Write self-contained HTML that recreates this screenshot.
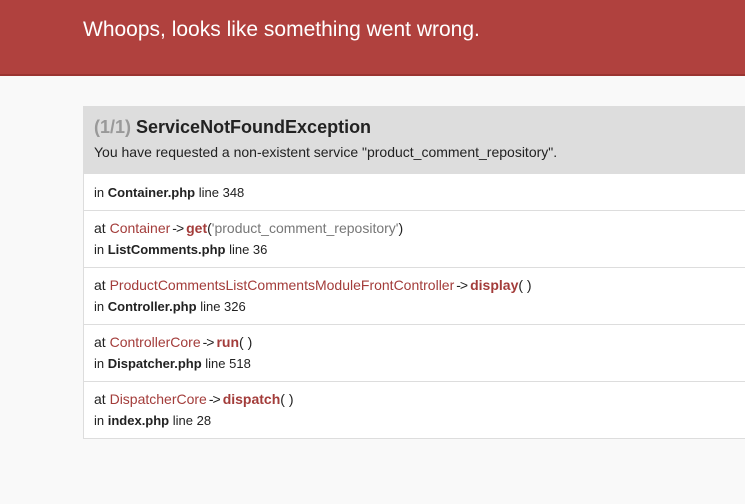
<!DOCTYPE html>
<html><head><style>
body{margin:0;background:#f9f9f9;font-family:"Liberation Sans",Arial,sans-serif;color:#222;width:745px;height:504px;overflow:hidden}
.hd{background:#b0413e;height:74px;border-bottom:2px solid #9a3431;}
.hd h1{margin:0;padding:18px 0 0 83px;font-size:21px;font-weight:normal;color:#fff;line-height:24px}
.box{position:absolute;left:83px;top:106px;width:700px;border:1px solid #ddd;background:#fff}
.top{background:#dddddd;height:66px;padding:0 0 0 10px}
.top h2{margin:0;padding-top:9px;font-size:18px;line-height:22px;font-weight:bold;color:#222}
.top h2 span{color:#999}
.top p{margin:6px 0 0;font-size:14px;color:#222}
.row{border-top:1px solid #ddd;padding:0 0 0 10px;font-size:13px;line-height:21px;box-sizing:border-box}
.row .a{font-size:14px}
.r1{height:37px;padding-top:8px}
.r2{height:57px;padding-top:7px}
.c{color:#a33c3a}
.f{color:#a33c3a;font-weight:bold}
.s{color:#777}
.ar{letter-spacing:-1px;margin:0 3px 0 2px}
b{color:#222}
</style></head><body>
<div class="hd"><h1>Whoops, looks like something went wrong.</h1></div>
<div class="box">
<div class="top"><h2><span>(1/1)</span> ServiceNotFoundException</h2>
<p>You have requested a non-existent service "product_comment_repository".</p></div>
<div class="row r1">in <b>Container.php</b> line 348</div>
<div class="row r2"><span class="a">at <span class="c">Container</span><span class="ar">-&gt;</span><span class="f">get</span>(<span class="s">'product_comment_repository'</span>)</span><br>in <b>ListComments.php</b> line 36</div>
<div class="row r2"><span class="a">at <span class="c">ProductCommentsListCommentsModuleFrontController</span><span class="ar">-&gt;</span><span class="f">display</span>( )</span><br>in <b>Controller.php</b> line 326</div>
<div class="row r2"><span class="a">at <span class="c">ControllerCore</span><span class="ar">-&gt;</span><span class="f">run</span>( )</span><br>in <b>Dispatcher.php</b> line 518</div>
<div class="row r2"><span class="a">at <span class="c">DispatcherCore</span><span class="ar">-&gt;</span><span class="f">dispatch</span>( )</span><br>in <b>index.php</b> line 28</div>
</div>
</body></html>
